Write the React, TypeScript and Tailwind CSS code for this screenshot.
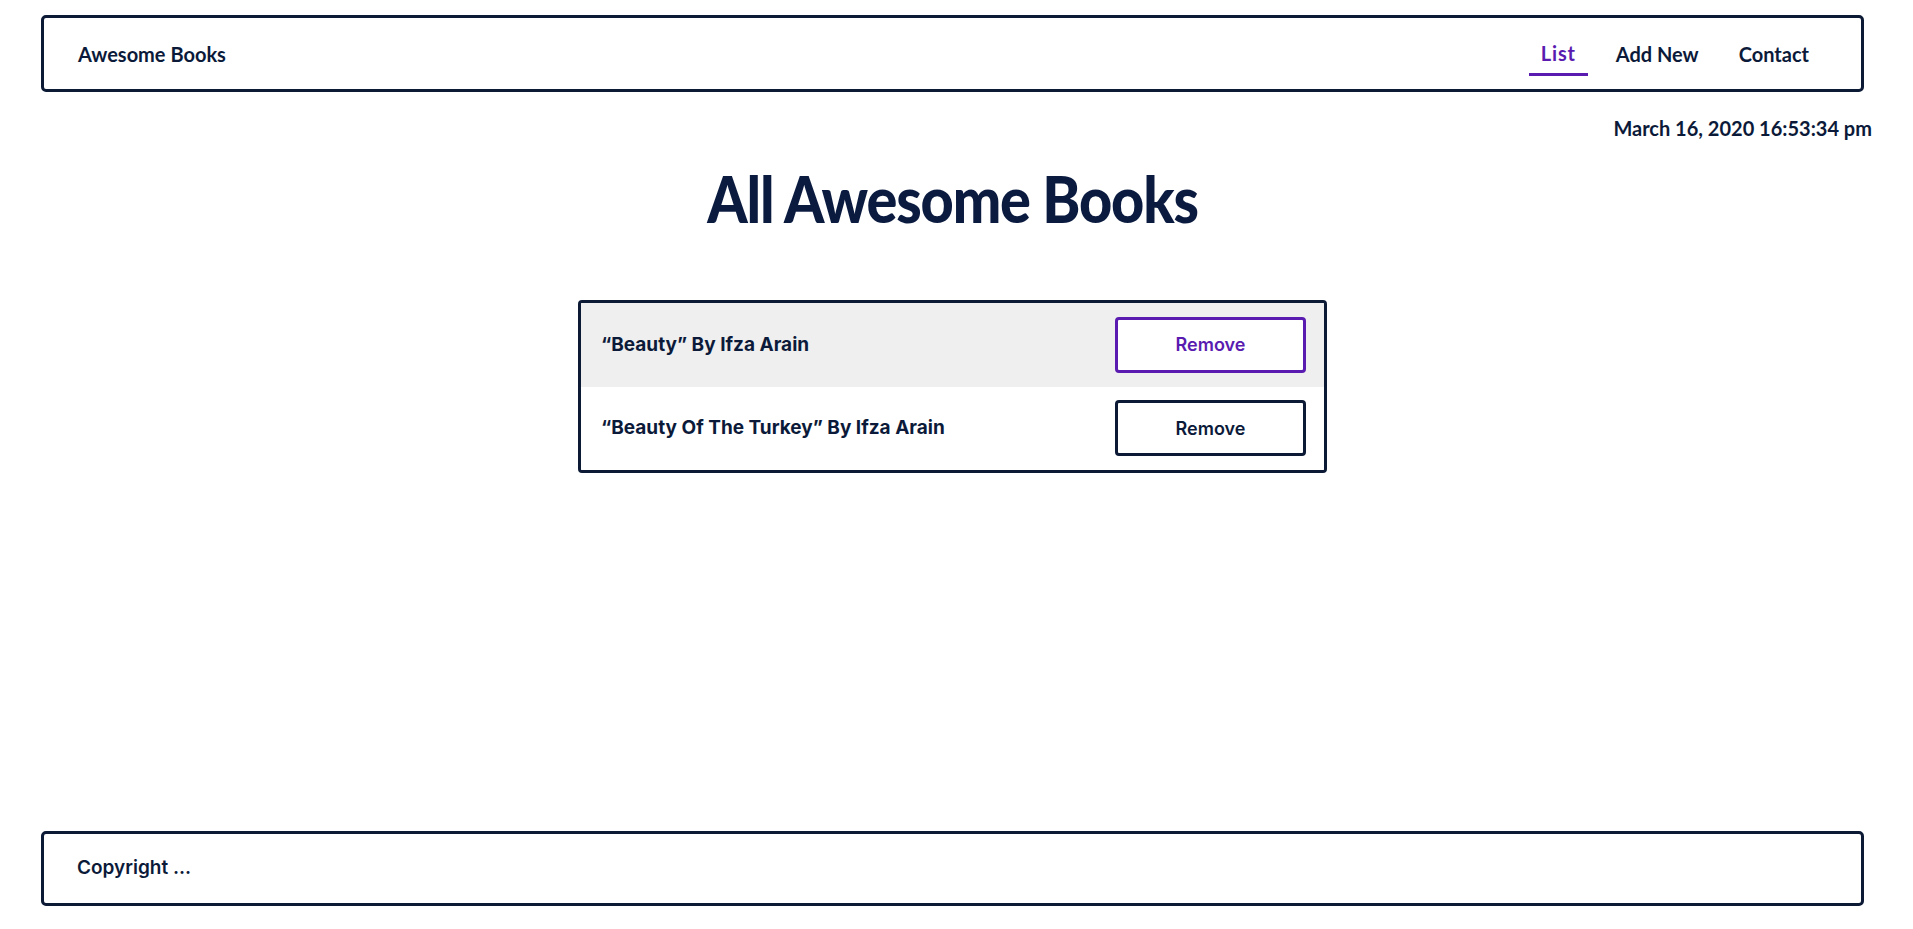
import React from "react";

const ink = "text-[#0c1a3a]";
const inter = { fontFamily: "Inter, 'Noto Sans', sans-serif" };

export default function App() {
  const books = [
    { title: "Beauty", author: "Ifza Arain", active: true },
    { title: "Beauty Of The Turkey", author: "Ifza Arain", active: false },
  ];
  return (
    <div
      className={`w-[1905px] h-[929px] flex flex-col bg-white ${ink}`}
      style={{ fontFamily: "Lato, 'Noto Sans', sans-serif" }}
    >
      <header className="mt-[15px] ml-[41px] w-[1823px] h-[77px] shrink-0 border-[3px] border-[#0c1a36] rounded-[5px] flex items-center justify-between pl-[34px] pr-[40px]">
        <span className="text-[20px] leading-[24px] font-bold">Awesome Books</span>
        <nav className="flex items-center gap-[16px] text-[20px] leading-[24px] font-bold">
          <a className="px-[12px] pt-[10px] pb-[8px] border-b-[3px] border-[#5a1bb0] text-[#5a1bb0] tracking-[0.04em]">List</a>
          <a className="px-[12px]">Add New</a>
          <a className="px-[12px]">Contact</a>
        </nav>
      </header>

      <div className="mt-[24px] pr-[33px] text-right text-[20px] leading-[24px] font-bold">
        March 16, 2020 16:53:34 pm
      </div>

      <div className="mt-[21px] text-center">
        <h1 className="inline-block scale-x-90 text-[64px] leading-[76px] font-black text-[#0b1b40] tracking-[-0.02em]">
          All Awesome Books
        </h1>
      </div>

      <ul className="mt-[63px] mx-auto w-[749px] border-[3px] border-[#0c1a36] rounded-[4px] overflow-hidden" style={inter}>
        {books.map((b) => (
          <li
            key={b.title}
            className={`h-[83.5px] flex items-center justify-between pl-[20px] pr-[18px] ${b.active ? "bg-[#efefef]" : "bg-white"}`}
          >
            <span className="text-[19px] font-bold">
              {"\u201C"}
              {b.title}
              {"\u201D"} By {b.author}
            </span>
            <button
              className={`w-[191px] h-[56px] rounded-[4px] border-[3px] bg-white text-[18px] font-semibold ${
                b.active ? "border-[#5a1bb0] text-[#5a1bb0]" : "border-[#0c1a36] text-[#0c1a3a]"
              }`}
            >
              Remove
            </button>
          </li>
        ))}
      </ul>

      <footer className="mt-auto mb-[23px] ml-[41px] w-[1823px] h-[75px] shrink-0 border-[3px] border-[#0c1a36] rounded-[5px] flex items-center pl-[33px]" style={inter}>
        <span className="text-[19px] font-semibold">Copyright ...</span>
      </footer>
    </div>
  );
}
